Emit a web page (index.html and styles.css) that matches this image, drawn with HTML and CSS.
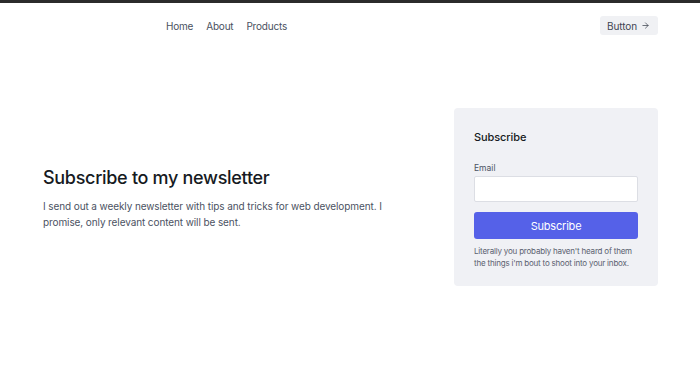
FILE: index.html
```html
<!DOCTYPE html>
<html lang="en">
<head>
    <meta charset="UTF-8">
    <meta name="viewport" content="width=device-width, initial-scale=1.0">
    <title>Newsletter</title>
    <link rel="stylesheet" href="styles.css">
</head>
<body>
    <header class="site-header">
        <nav class="main-nav">
            <a href="#">Home</a>
            <a href="#">About</a>
            <a href="#">Products</a>
        </nav>
        <button class="header-btn">Button
            <svg width="9" height="9" viewBox="0 0 24 24" fill="none" stroke="currentColor" stroke-width="2" stroke-linecap="round" stroke-linejoin="round"><path d="M5 12h14M12 5l7 7-7 7"/></svg>
        </button>
    </header>

    <section class="hero">
        <div class="hero-text">
            <h1>Subscribe to my newsletter</h1>
            <p>I send out a weekly newsletter with tips and tricks for web development. I promise, only relevant content will be sent.</p>
        </div>
        <div class="card">
            <h2>Subscribe</h2>
            <label class="field-label" for="email">Email</label>
            <input class="field-input" type="email" id="email">
            <button class="submit-btn">Subscribe</button>
            <p class="note">Literally you probably haven't heard of them the things i'm bout to shoot into your inbox.</p>
        </div>
    </section>
</body>
</html>
```

FILE: styles.css
```css
body {
    margin: 0;
    font-family: Inter, "Noto Sans", sans-serif;
    color: #1f2430;
    border-top: 3px solid #2b2b2b;
    background: #fff;
}
.site-header {
    display: flex;
    align-items: center;
    justify-content: space-between;
    padding: 13px 42px 0 166px;
}
.main-nav {
    display: flex;
    gap: 13px;
}
.main-nav a {
    font-size: 10px;
    letter-spacing: -0.2px;
    color: #4a5160;
    text-decoration: none;
}
.header-btn {
    display: flex;
    align-items: center;
    gap: 4px;
    background: #f0f1f4;
    border: 0;
    border-radius: 3px;
    padding: 0 8px 0 7px;
    height: 19px;
    font-family: inherit;
    font-size: 10px;
    letter-spacing: -0.1px;
    color: #3f4552;
}
.hero {
    display: flex;
    align-items: center;
    justify-content: space-between;
    padding: 73px 42px 0 43px;
}
.hero-text {
    padding-top: 3px;
}
.hero-text h1 {
    margin: 0 0 10px;
    font-size: 18px;
    letter-spacing: -0.3px;
    font-weight: 500;
    color: #161a22;
}
.hero-text p {
    margin: 0;
    width: 340px;
    font-size: 10px;
    letter-spacing: -0.1px;
    line-height: 16px;
    color: #4b5262;
}
.card {
    width: 164px;
    background: #f0f1f5;
    border-radius: 4px;
    padding: 22px 20px 17px;
}
.card h2 {
    margin: 0 0 19px;
    font-size: 11px;
    letter-spacing: -0.1px;
    font-weight: 500;
    color: #161a22;
}
.field-label {
    display: block;
    font-size: 8.5px;
    color: #4b5262;
    margin-bottom: 3px;
}
.field-input {
    display: block;
    box-sizing: border-box;
    width: 100%;
    height: 26px;
    border: 1px solid #dcdee4;
    border-radius: 2px;
    background: #fff;
    margin: 0 0 10px;
}
.submit-btn {
    display: block;
    width: 100%;
    height: 27px;
    background: #5561e8;
    border: 0;
    border-radius: 3px;
    color: #fff;
    font-family: inherit;
    font-size: 11px;
    letter-spacing: -0.2px;
}
.note {
    margin: 6px 0 0;
    font-size: 8px;
    letter-spacing: -0.2px;
    line-height: 12px;
    color: #5b6170;
}
```
